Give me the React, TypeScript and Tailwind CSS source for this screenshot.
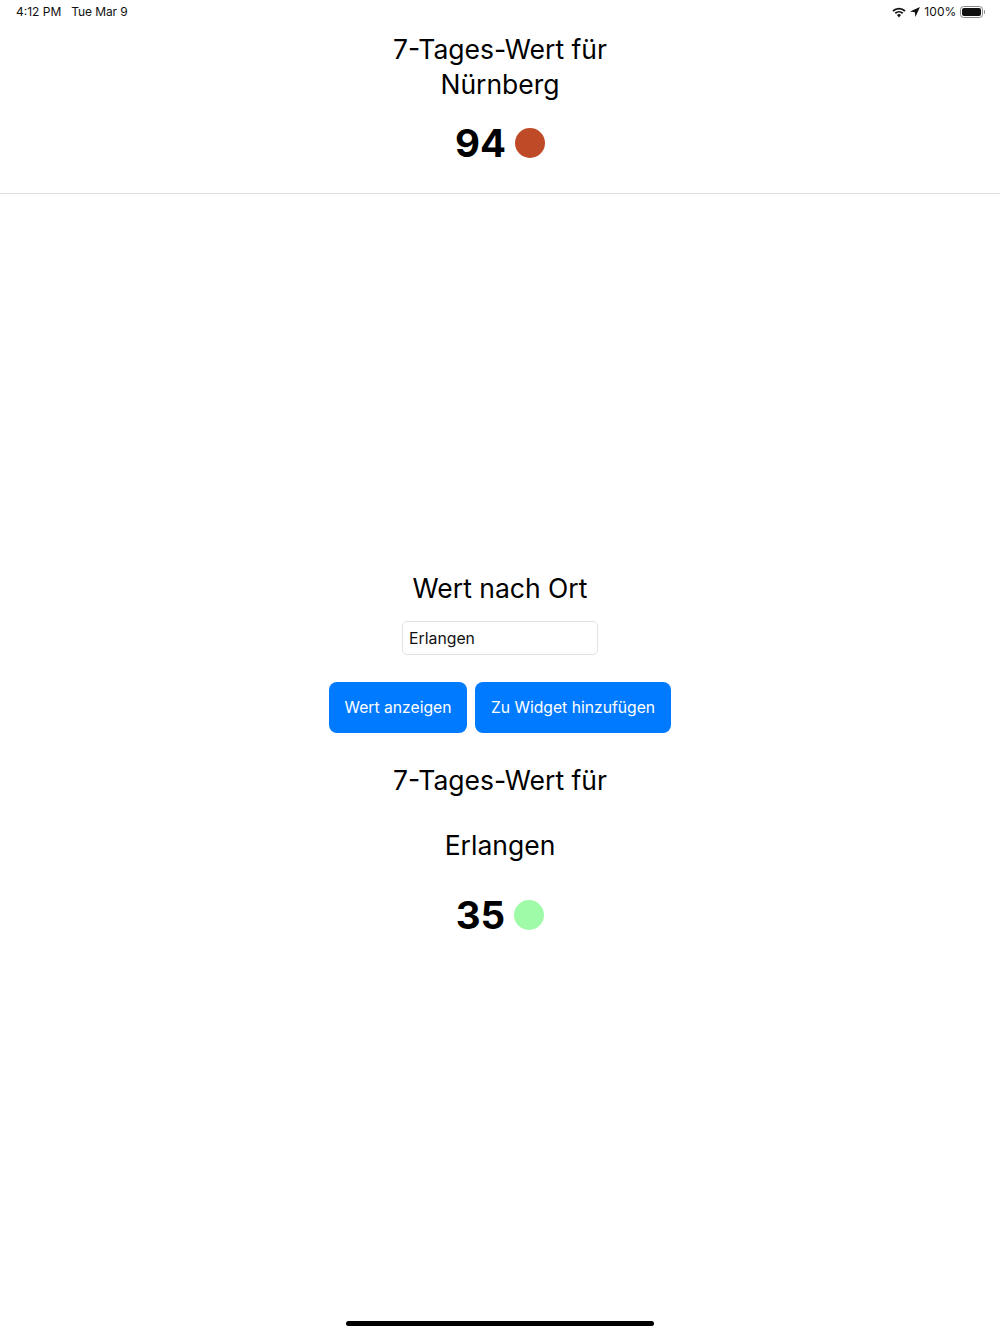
const StatusBar = () => (
  <div className="flex h-[24px] items-center justify-between pl-4 pr-[15px] text-[12px] text-[#111]">
    <div className="flex gap-[10px]">
      <span>4:12 PM</span>
      <span className="tracking-[-0.1px]">Tue Mar 9</span>
    </div>
    <div className="flex items-center">
      <svg width="14" height="11" viewBox="0 0 14 11" className="mr-[4px]">
        <path d="M1 4 A9 9 0 0 1 13 4" fill="none" stroke="#111" strokeWidth="1.8" />
        <path d="M3.3 6.2 A5.6 5.6 0 0 1 10.7 6.2" fill="none" stroke="#111" strokeWidth="1.8" />
        <path d="M5 8 A3 3 0 0 1 9 8 L7 10.4 Z" fill="#111" />
      </svg>
      <svg width="10" height="10" viewBox="0 0 10 10" className="mr-[4px]">
        <path d="M10 0 L0 4.6 L4.8 5.2 L5.4 10 Z" fill="#111" />
      </svg>
      <span className="mr-[3px] tracking-[0.1px]">100%</span>
      <div className="flex items-center">
        <div className="h-[12px] w-[23px] rounded-[3.5px] border border-[#888] p-[1px]">
          <div className="h-full w-full rounded-[2px] bg-[#111]" />
        </div>
        <div className="ml-[1px] h-[4px] w-[1.5px] rounded-r-sm bg-[#888]" />
      </div>
    </div>
  </div>
);

const Score = ({ value, color }: { value: number; color: string }) => (
  <div className="flex items-center justify-center gap-[9px]">
    <span className="text-[38.5px] leading-[46px] font-bold">{value}</span>
    <div className={`h-[30px] w-[30px] rounded-full ${color}`} />
  </div>
);

export default function App() {
  return (
    <div className="flex min-h-[1334px] flex-col bg-white font-['Inter','Liberation_Sans',sans-serif] text-black">
      <StatusBar />
      <div className="flex h-[170px] flex-col items-center border-b border-[#e0e0e0] pt-[8px]">
        <h1 className="text-center text-[26.5px] leading-[35px] font-normal">
          7-Tages-Wert für
          <br />
          Nürnberg
        </h1>
        <div className="mt-[18px]">
          <Score value={94} color="bg-[#bf4a28]" />
        </div>
      </div>

      <div className="flex flex-col items-center pt-[377px]">
        <h2 className="text-[26.5px] leading-[35px]">Wert nach Ort</h2>
        <input
          readOnly
          value="Erlangen"
          className="mt-[15px] h-[34px] w-[196px] rounded-[5px] border border-[#e2e2e2] px-[6px] text-[15.8px] text-[#111] outline-none"
        />
        <div className="mt-[27px] flex gap-2">
          <button className="h-[51px] w-[138px] rounded-lg bg-[#007aff] text-[15.7px] text-white">
            Wert anzeigen
          </button>
          <button className="h-[51px] w-[196px] rounded-lg bg-[#007aff] text-[15.7px] text-white">
            Zu Widget hinzufügen
          </button>
        </div>
        <h2 className="mt-[30px] text-[26.5px] leading-[35px]">7-Tages-Wert für</h2>
        <h2 className="mt-[30px] text-[26.5px] leading-[35px]">Erlangen</h2>
        <div className="mt-[29px]">
          <Score value={35} color="bg-[#a0fba8]" />
        </div>
      </div>

      <div className="mt-auto flex justify-center pb-[8px]">
        <div className="h-[5px] w-[308px] rounded-full bg-black" />
      </div>
    </div>
  );
}
